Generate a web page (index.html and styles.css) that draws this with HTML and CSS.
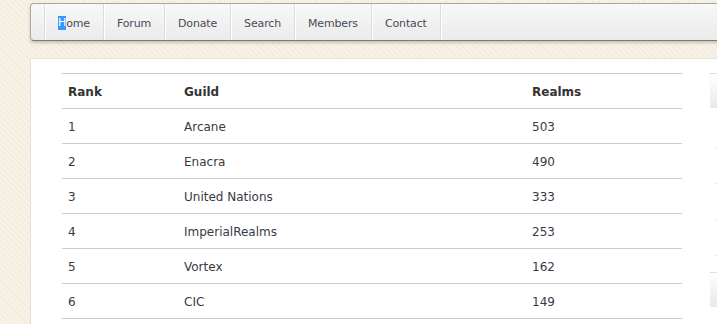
FILE: index.html
```html
<!DOCTYPE html>
<html lang="en">
<head>
<meta charset="utf-8">
<title>Guild Rankings</title>
<link rel="stylesheet" href="styles.css">
</head>
<body>
<div class="page">
  <nav class="nav">
    <ul class="nav-list">
      <li class="nav-item"><a href="#"><span class="sel">H</span>ome</a></li>
      <li class="nav-item"><a href="#">Forum</a></li>
      <li class="nav-item"><a href="#">Donate</a></li>
      <li class="nav-item"><a href="#">Search</a></li>
      <li class="nav-item"><a href="#">Members</a></li>
      <li class="nav-item"><a href="#">Contact</a></li>
      <li class="nav-item nav-end"></li>
    </ul>
  </nav>

  <div class="panel">
    <main class="main">
      <table class="ranks">
        <colgroup>
          <col class="c-rank">
          <col class="c-guild">
          <col class="c-realms">
        </colgroup>
        <thead>
          <tr><th>Rank</th><th>Guild</th><th>Realms</th></tr>
        </thead>
        <tbody>
          <tr><td>1</td><td>Arcane</td><td>503</td></tr>
          <tr><td>2</td><td>Enacra</td><td>490</td></tr>
          <tr><td>3</td><td>United Nations</td><td>333</td></tr>
          <tr><td>4</td><td>ImperialRealms</td><td>253</td></tr>
          <tr><td>5</td><td>Vortex</td><td>162</td></tr>
          <tr><td>6</td><td>CIC</td><td>149</td></tr>
        </tbody>
      </table>
    </main>
    <aside class="side">
      <div class="side-box"></div>
      <ul class="side-list">
        <li></li><li></li><li></li><li></li>
      </ul>
      <div class="side-box side-box-2"></div>
    </aside>
  </div>
</div>
</body>
</html>
```

FILE: styles.css
```css
html, body {
  margin: 0;
  padding: 0;
  height: 100%;
  overflow: hidden;
}

body {
  font-family: "DejaVu Sans", Verdana, sans-serif;
  background-color: #f6f0e4;
  background-image: repeating-linear-gradient(45deg, #f7f1e6 0, #f7f1e6 3px, #f1ebdf 3px, #f1ebdf 4px);
}

.page {
  padding: 3px 0 0 30px;
  width: 900px;
}

/* top navigation bar */
.nav {
  height: 36px;
  border: 1px solid #a9a9a9;
  border-right: none;
  border-bottom-color: #7d7a74;
  border-radius: 4px 0 0 4px;
  background: linear-gradient(#f8f8f8, #ebebeb);
  box-shadow: 0 2px 3px rgba(90, 80, 60, 0.28);
}

.nav-list {
  display: flex;
  height: 100%;
  margin: 0;
  padding: 0 0 0 13px;
  list-style: none;
}

.nav-item {
  display: flex;
  border-left: 1px solid #dcdcdc;
  box-shadow: inset 1px 0 #ffffff;
}

.nav-item a {
  display: flex;
  align-items: center;
  padding: 2px 13px 0 13px;
  font-size: 11px;
  letter-spacing: -0.15px;
  color: #4b4a55;
  text-decoration: none;
}

.nav-end {
  width: 20px;
}

.sel {
  background: #3399ff;
  color: #ffffff;
  line-height: 14px;
}

/* white content panel */
.panel {
  display: flex;
  gap: 28px;
  margin-top: 17px;
  padding: 14px 0 0 31px;
  min-height: 300px;
  background: #ffffff;
  border-top: 1px solid #e4e1dc;
  border-left: 1px solid #e4e1dc;
}

.ranks {
  width: 620px;
  border-collapse: collapse;
  table-layout: fixed;
  font-size: 12px;
  color: #3a3a44;
  border-top: 1px solid #cccccc;
}

.c-rank { width: 116px; }
.c-guild { width: 348px; }
.c-realms { width: 156px; }

.ranks th,
.ranks td {
  height: 32px;
  padding: 2px 6px 0 6px;
  text-align: left;
  line-height: 14px;
  border-bottom: 1px solid #cccccc;
}

.ranks th {
  font-weight: bold;
  color: #333333;
}

/* right sidebar */
.side {
  width: 200px;
}

.side-box {
  height: 34px;
  border-top: 1px solid #dddddd;
  background: linear-gradient(#ffffff, #e9e9e9);
}

.side-list {
  list-style: none;
  margin: 4px 0 0 0;
  padding: 0;
}

.side-list li {
  height: 36px;
  position: relative;
}

.side-list li::after {
  content: "";
  position: absolute;
  left: 5px;
  bottom: 0;
  width: 1px;
  height: 1px;
  background: #d4d4d4;
}

.side-box-2 {
  margin-top: 16px;
}
```
